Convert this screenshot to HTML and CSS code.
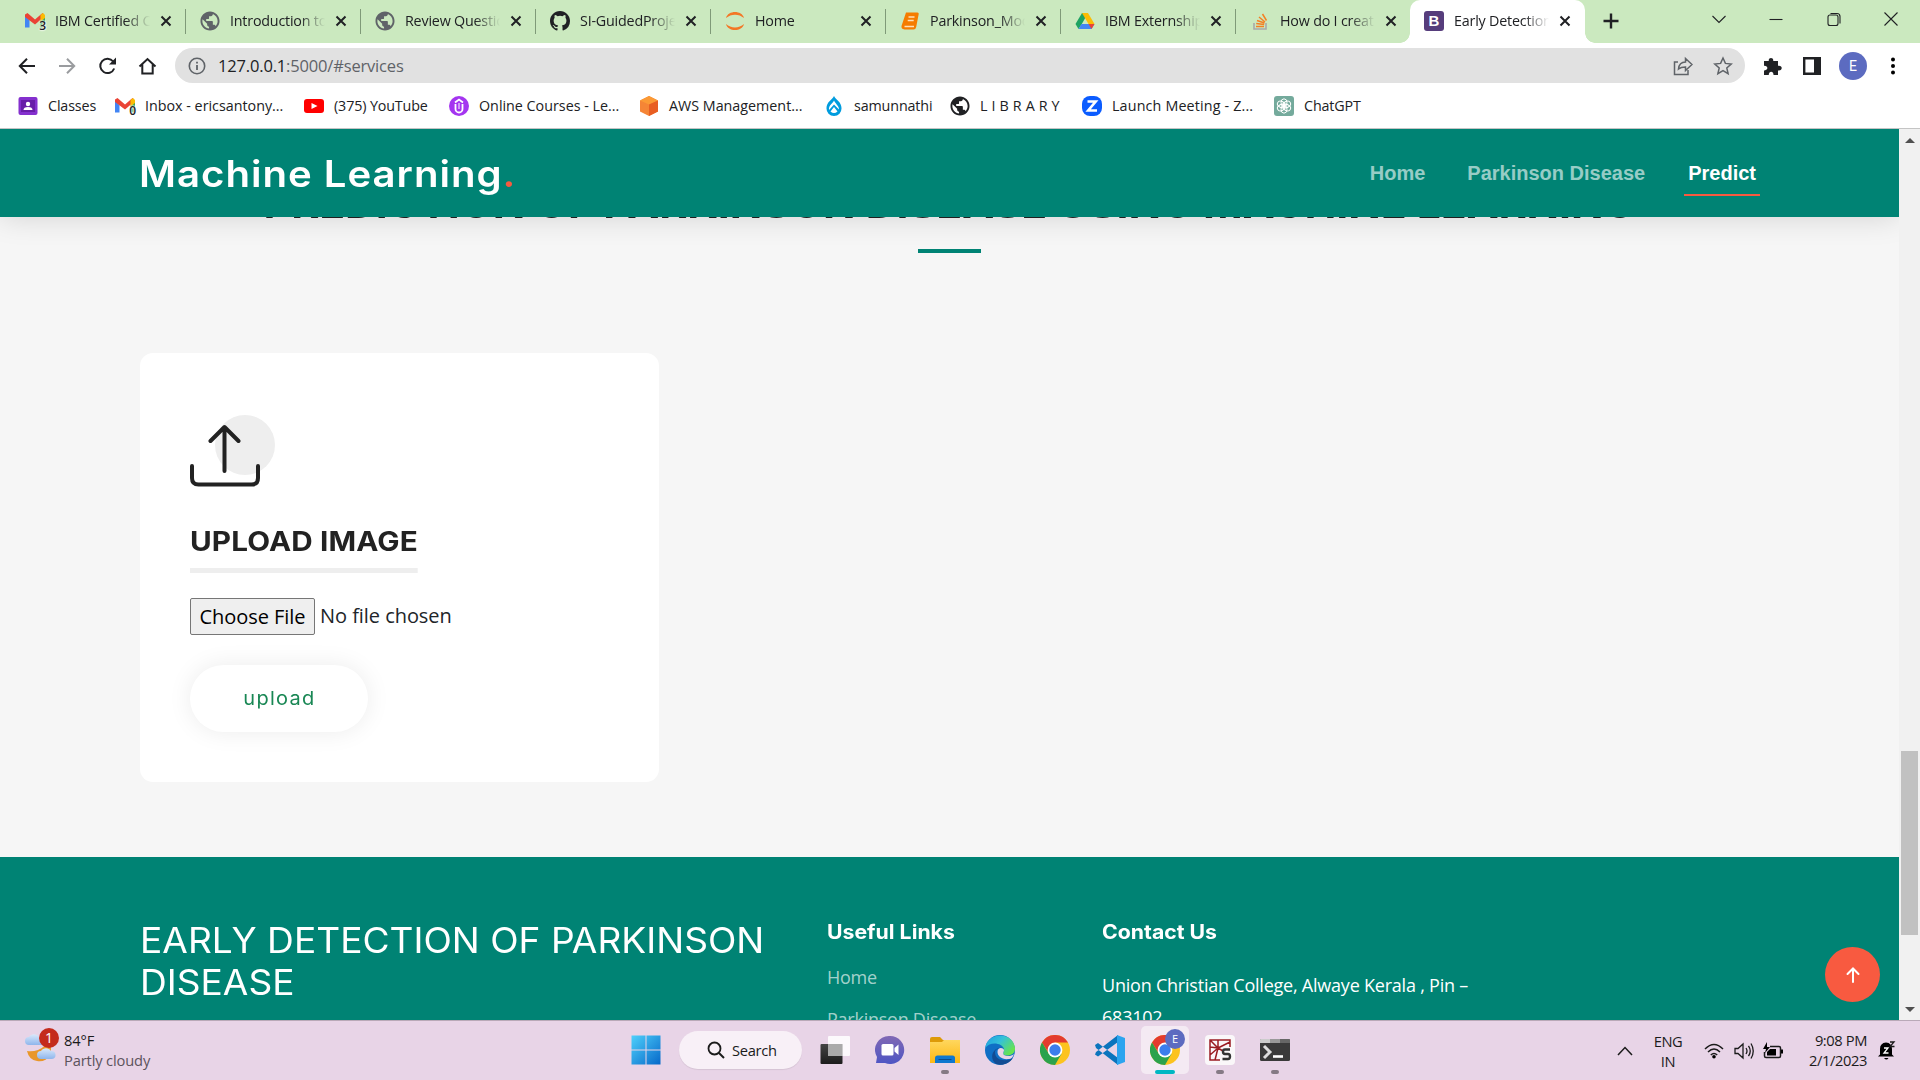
FILE: index.html
```html
<!DOCTYPE html>
<html lang="en">
<head>
<meta charset="utf-8">
<title>Early Detection of Parkinson Disease</title>
<link rel="stylesheet" href="styles.css">
</head>
<body>
<svg class="defs" width="0" height="0">
  <defs>
    <symbol id="gmail" viewBox="0 0 20 20"><path d="M0 5v11.500h4.500V9z" fill="#4285f4"/><path d="M15.500 9v7.500H20V5z" fill="#34a853"/><path d="M0 3.500 2.500 2 10 8.500 17.500 2 20 5 10 13.500 0 6z" fill="#ea4335"/><path d="M15.500 4 18 2l2 2v3l-4.500 3.500z" fill="#fbbc04"/></symbol>
    <symbol id="globe" viewBox="1.500 1.500 21 21"><path fill="currentColor" d="M12 2C6.480 2 2 6.480 2 12s4.480 10 10 10 10-4.480 10-10S17.520 2 12 2zm-1 17.930c-3.950-.49-7-3.850-7-7.930 0-.62.080-1.210.21-1.790L9 15v1c0 1.100.9 2 2 2v1.930zm6.900-2.540c-.26-.81-1-1.390-1.900-1.390h-1v-3c0-.55-.45-1-1-1H8v-2h2c.55 0 1-.45 1-1V7h2c1.100 0 2-.9 2-2v-.41c2.930 1.190 5 4.060 5 7.410 0 2.080-.8 3.970-2.100 5.390z"/></symbol>
    <symbol id="close" viewBox="0 0 12 12"><path d="M1.500 1.500l9 9m0-9l-9 9" stroke="#202124" stroke-width="2" fill="none"/></symbol>
    <symbol id="chrome" viewBox="0 0 30 30"><circle cx="15" cy="15" r="15" fill="#fcc31e"/><path d="M2 7.500A15 15 0 0 1 28 7.500H15L9 18.500z" fill="#e33b2e"/><path d="M2 7.500A15 15 0 0 0 15 30L21.500 18.700 9 19z" fill="#2ba24c"/><circle cx="15" cy="15" r="7.400" fill="#fff"/><circle cx="15" cy="15" r="5.700" fill="#3b7ded"/></symbol>
    <linearGradient id="gwin" x2="1" y2="1"><stop stop-color="#4fd0fb"/><stop offset="1" stop-color="#0668c9"/></linearGradient>
    <linearGradient id="gtask" x2="0" y2="1"><stop stop-color="#444"/><stop offset="1" stop-color="#1c1c1c"/></linearGradient>
    <linearGradient id="gchat" x2="0" y2="1"><stop stop-color="#8168b4"/><stop offset="1" stop-color="#4d55c4"/></linearGradient>
    <linearGradient id="gfold" x2="0" y2="1"><stop stop-color="#ffd75e"/><stop offset="1" stop-color="#fdb813"/></linearGradient>
    <linearGradient id="gedge" x2="1" y2=".6"><stop stop-color="#1b9de2"/><stop offset=".5" stop-color="#35c1d8"/><stop offset="1" stop-color="#66e34f"/></linearGradient>
    <linearGradient id="gcloud" x2="0" y2="1"><stop stop-color="#d8e8fb"/><stop offset="1" stop-color="#8fb6ec"/></linearGradient>
  </defs>
</svg>

<div class="tabs">
  <div class="tab"><span class="fav"><svg viewBox="0 0 20 20"><use href="#gmail"/></svg><b class="count">3</b></span><span class="tab-title">IBM Certified C</span><svg class="x"><use href="#close"/></svg></div>
  <div class="tab"><svg class="fav grey" viewBox="0 0 20 20"><use href="#globe"/></svg><span class="tab-title">Introduction to</span><svg class="x"><use href="#close"/></svg></div>
  <div class="tab"><svg class="fav grey" viewBox="0 0 20 20"><use href="#globe"/></svg><span class="tab-title">Review Questio</span><svg class="x"><use href="#close"/></svg></div>
  <div class="tab"><svg class="fav" viewBox="0 0 16 16"><path fill="#202124" d="M8 0C3.580 0 0 3.580 0 8c0 3.540 2.290 6.530 5.470 7.590.4.070.55-.17.55-.38v-1.490c-2.010.37-2.530-.49-2.690-.94-.09-.23-.48-.94-.82-1.130-.28-.15-.68-.52-.01-.53.63-.01 1.080.58 1.230.82.72 1.210 1.870.87 2.330.66.07-.52.28-.87.51-1.070-1.780-.2-3.640-.89-3.640-3.950 0-.87.31-1.590.82-2.150-.08-.2-.36-1.020.08-2.120 0 0 .67-.21 2.200.82a7.600 7.600 0 0 1 4 0c1.530-1.040 2.200-.82 2.200-.82.44 1.100.16 1.920.08 2.120.51.56.82 1.270.82 2.150 0 3.070-1.870 3.750-3.650 3.950.29.25.54.73.54 1.480v2.200c0 .21.15.46.55.38A8 8 0 0 0 16 8c0-4.420-3.580-8-8-8z"/></svg><span class="tab-title">SI-GuidedProje</span><svg class="x"><use href="#close"/></svg></div>
  <div class="tab"><svg class="fav" viewBox="0 0 20 20"><path d="M1 7C3-1 17-1 19 7 14 2.500 6 2.500 1 7zM1 13c2 8 16 8 18 0-5 4.500-13 4.500-18 0z" fill="#f37726"/></svg><span class="tab-title">Home</span><svg class="x"><use href="#close"/></svg></div>
  <div class="tab"><svg class="fav" viewBox="0 0 20 20"><path d="M6 1.500h11.500q1.500 0 1.200 1.500l-2.500 13q-.5 2.500-2.700 2.500H4.500Q1 18 1.500 15z" fill="#f57c00"/><path d="M8.500 6h6M7.700 9.500h6M4.500 15.500h9.500" stroke="#ffe0b8" stroke-width="1.300"/></svg><span class="tab-title">Parkinson_Mod</span><svg class="x"><use href="#close"/></svg></div>
  <div class="tab"><svg class="fav" viewBox="0 0 20 20"><path d="M7 2h6L6.500 13.500 3.500 18 .5 13z" fill="#1ea362"/><path d="M7 2h6l6.500 11h-6z" fill="#fbbc04"/><path d="M6.500 13h13l-3 5h-13z" fill="#4285f4"/><path d="M13.500 13h6l-3 5z" fill="#ea4335"/></svg><span class="tab-title">IBM Externship</span><svg class="x"><use href="#close"/></svg></div>
  <div class="tab last"><svg class="fav" viewBox="0 0 20 20"><path d="M4 12v6h12v-6" stroke="#a9a9a9" stroke-width="1.600" fill="none"/><path d="M6 15.500h8M6.200 12.600l8 .8M7 9.500l7.500 2.500M9 6l6 5M12.500 3l4 6.500" stroke="#f48024" stroke-width="1.500"/></svg><span class="tab-title">How do I creat</span><svg class="x"><use href="#close"/></svg></div>
  <div class="tab active"><span class="fav boot">B</span><span class="tab-title">Early Detection</span><svg class="x"><use href="#close"/></svg></div>
  <svg class="plus" viewBox="0 0 16 16"><path d="M8 .5v15M.5 8h15" stroke="#202124" stroke-width="2.400"/></svg>
  <div class="winctl">
    <svg viewBox="0 0 16 16"><path d="M1.500 5 8 11.500 14.500 5"/></svg>
    <svg viewBox="0 0 16 16"><path d="M1.500 8.500h13"/></svg>
    <svg viewBox="0 0 16 16"><rect x="2" y="4" width="10" height="10.500" rx="2"/><path d="M4.500 2.500H11q3 0 3 3v7"/></svg>
    <svg viewBox="0 0 16 16"><path d="M1.500 1.500l13 13m0-13l-13 13"/></svg>
  </div>
</div>

<div class="toolbar">
  <svg class="nav-ic" viewBox="0 0 20 20"><path d="M18 10H3m7-7.200L2.800 10l7.200 7.200"/></svg>
  <svg class="nav-ic dim" viewBox="0 0 20 20"><path d="M2 10h15m-7-7.200 7.200 7.200-7.200 7.200"/></svg>
  <svg class="nav-ic" viewBox="0 0 20 20"><path d="M17.200 12.500A7.200 7.200 0 1 1 16.200 5.500"/><path d="M19 1.500v7h-7z" fill="#202124" stroke="none"/></svg>
  <svg class="nav-ic" viewBox="0 0 20 20"><path d="M2.500 10.500 10.500 3l8 7.500M5.300 8.500v9h10.400v-9"/></svg>
  <div class="omnibox">
    <svg class="info" viewBox="0 0 18 18"><circle cx="9" cy="9" r="7.700" fill="none" stroke="#5f6368" stroke-width="1.600"/><path d="M9 8v5M9 4.800v1.800" stroke="#5f6368" stroke-width="1.800"/></svg>
    <span class="url"><b>127.0.0.1</b>:5000/#services</span>
    <svg class="omni-ic" viewBox="0 0 20 20"><path d="M5 6H1.500v12.500H15V14M5.500 13c.5-5 3-7 7-7V2.500l6.500 6-6.500 6V11c-3 0-5 .2-7 2z"/></svg>
    <svg class="omni-ic star" viewBox="0 0 20 20"><path d="M10 2l2.400 5.400 5.800.6-4.400 3.900 1.300 5.800L10 14.700l-5.100 3 1.300-5.800L1.800 8l5.800-.6z"/></svg>
  </div>
  <svg class="puzzle" viewBox="0 0 20 20"><path fill="#202124" d="M1 5h4.800C5 1 11 1 10.200 5H15v4.800c5-.8 5 5.400 0 4.600V19h-4.500c.3-4.500-5-4.500-4.700 0H1v-4.600c4.500.4 4.500-5 0-4.600z"/></svg>
  <svg class="panel-ic" viewBox="0 0 18 18"><path d="M1.200 1.200h15.600v15.600H1.200z" fill="#fff" stroke="#202124" stroke-width="2.400"/><path d="M11 1h6v16h-6z" fill="#202124"/></svg>
  <span class="avatar">E</span>
  <svg class="dots" viewBox="0 0 4 18"><circle cx="2" cy="2.500" r="2"/><circle cx="2" cy="9" r="2"/><circle cx="2" cy="15.500" r="2"/></svg>
</div>

<div class="bookmarks">
  <span class="bm"><svg viewBox="0 0 20 20"><rect x=".5" y="1" width="19" height="18" rx="2" fill="#8430ce"/><rect x="3" y="4" width="14" height="12" fill="#681da8"/><circle cx="10" cy="8" r="2.200" fill="#fff"/><path d="M5.500 14q0-3 4.500-3t4.500 3z" fill="#fff"/></svg>Classes</span>
  <span class="bm wide"><span class="fav"><svg viewBox="0 0 20 20"><use href="#gmail"/></svg><b class="count">0</b></span>Inbox - ericsantony...</span>
  <span class="bm"><svg viewBox="0 0 20 20"><rect y="3" width="20" height="14" rx="3" fill="#f00"/><path d="M7.500 7v6l6-3z" fill="#fff"/></svg>(375) YouTube</span>
  <span class="bm wide"><svg viewBox="0 0 20 20"><circle cx="10" cy="10" r="10" fill="#a435f0"/><path d="M6.500 8v5a3.500 3.500 0 0 0 7 0V8M6 6.500l4-3 4 3" fill="none" stroke="#fff" stroke-width="1.800"/><path d="M10 7v6" stroke="#fff"/></svg>Online Courses - Le...</span>
  <span class="bm wide"><svg viewBox="0 0 20 20"><path d="M10 0l9 4.500v11L10 20l-9-4.500v-11z" fill="#f58536"/><path d="M10 0l9 4.500L10 8.500 1 4.500z" fill="#fb9a35"/><path d="M10 8.500l9-4v11L10 20z" fill="#e85e22"/></svg>AWS Management...</span>
  <span class="bm"><svg viewBox="0 0 20 20"><path d="M10 0c2 4 7.500 6 7.500 12A7.500 7.500 0 0 1 10 20a7.500 7.500 0 0 1-7.500-8C2.500 6 8 4 10 0z" fill="#009cde"/><path d="M10 4.500c1 3 5 5 5 9L10 8.500 5 14C4.500 9 9 7.500 10 4.500zM10 11l3.500 4.500q-3.500 3-7 0z" fill="#fff"/></svg>samunnathi</span>
  <span class="bm lib"><svg viewBox="0 0 20 20"><use href="#globe"/></svg>L I B R A R Y</span>
  <span class="bm zoom"><svg viewBox="0 0 20 20"><rect width="20" height="20" rx="8" fill="#0b5cff"/><path d="M5.500 5.500h8.200l-7.500 9H15" fill="none" stroke="#fff" stroke-width="2.600"/></svg>Launch Meeting - Z...</span>
  <span class="bm"><svg viewBox="0 0 20 20"><rect width="20" height="20" rx="3" fill="#74aa9c"/><g fill="none" stroke="#fff" stroke-width="1"><ellipse cx="10" cy="6.800" rx="3" ry="4"/><ellipse cx="10" cy="6.800" rx="3" ry="4" transform="rotate(60 10 10)"/><ellipse cx="10" cy="6.800" rx="3" ry="4" transform="rotate(120 10 10)"/><ellipse cx="10" cy="6.800" rx="3" ry="4" transform="rotate(180 10 10)"/><ellipse cx="10" cy="6.800" rx="3" ry="4" transform="rotate(240 10 10)"/><ellipse cx="10" cy="6.800" rx="3" ry="4" transform="rotate(300 10 10)"/></g></svg>ChatGPT</span>
</div>

<div class="viewport">
  <div class="page">
    <header class="site-header">
      <div class="logo">Machine Learning<span>.</span></div>
      <nav><a>Home</a><a>Parkinson Disease</a><a class="current">Predict</a></nav>
    </header>
    <section class="services">
      <h2>PREDICTION OF PARKINSON DISEASE USING MACHINE LEARNING</h2>
      <div class="rule"></div>
      <div class="card">
        <svg class="upload-ic" width="86" height="72" viewBox="0 0 86 72"><circle cx="55" cy="30" r="30" fill="#eee"/><path d="M34.500 56V13M20.500 26l14-14 14 14M2 51v12q0 6.500 6.500 6.500h53q6.500 0 6.500-6.500V51" fill="none" stroke="#222" stroke-width="4" stroke-linecap="round" stroke-linejoin="round"/></svg>
        <h3>UPLOAD IMAGE</h3>
        <div class="file"><button>Choose File</button><span>No file chosen</span></div>
        <button class="upload"><span>upload</span></button>
      </div>
    </section>
    <footer>
      <div class="brand">EARLY DETECTION OF PARKINSON<br>DISEASE</div>
      <div class="links"><h4>Useful Links</h4><a>Home</a><a>Parkinson Disease</a></div>
      <div class="contact"><h4>Contact Us</h4><p>Union Christian College, Alwaye Kerala , Pin –<br>683102</p></div>
    </footer>
    <div class="to-top"><svg width="16" height="18" viewBox="0 0 16 18"><path d="M8 16V2.500M2.500 8 8 2.500 13.500 8" fill="none" stroke="#fff" stroke-width="2" stroke-linecap="round"/></svg></div>
  </div>
  <div class="scrollbar"><i class="up"></i><i class="thumb"></i><i class="down"></i></div>
</div>

<div class="taskbar">
  <div class="weather">
    <span class="w-ic"><svg width="32" height="34" viewBox="0 0 32 34"><path d="M3 22q5 1 11-1 8-3 9-10l4-1v14a12 12 0 0 1-14 8q-8-1-10-10z" fill="#e9972a"/><path d="M5 16a4 4 0 0 1 0-8 6 6 0 0 1 10 0q4 1 3 8z" fill="url(#gcloud)"/><path d="M17 30a4 4 0 0 1 0-8 6 6 0 0 1 10 0 4 4 0 0 1 1 8z" fill="url(#gcloud)"/></svg><b>1</b></span>
    <span class="w-text"><span>84°F</span><em>Partly cloudy</em></span>
  </div>
  <div class="apps">
    <span class="app"><svg viewBox="0 0 30 30"><path fill="url(#gwin)" d="M.5.500h14v14H.5zM15.500.500h14v14h-14zM.5 15.500h14v14H.5zM15.500 15.500h14v14h-14z"/></svg></span>
    <span class="search"><svg width="18" height="18" viewBox="0 0 18 18"><circle cx="7.500" cy="7.500" r="6" fill="none" stroke="#1b1b1b" stroke-width="1.800"/><path d="M12 12l5 5" stroke="#1b1b1b" stroke-width="2"/></svg>Search</span>
    <span class="app"><svg viewBox="0 0 30 30"><rect x=".5" y="9" width="22" height="20" rx="1" fill="url(#gtask)"/><rect x="8" y="1" width="22" height="20" rx="1" fill="#fff" opacity=".85"/><path d="M8 9h14.500v12H8z" fill="#aaa"/></svg></span>
    <span class="app"><svg viewBox="0 0 30 30"><path d="M15 1a14 14 0 1 1-5 27H1l1-6A14 14 0 0 1 15 1z" fill="url(#gchat)"/><rect x="6.500" y="9" width="12" height="11.500" rx="1.500" fill="#fff"/><path d="M19.500 13l4-3.500v10.500l-4-3.500z" fill="#fff"/></svg></span>
    <span class="app run"><svg viewBox="0 0 30 30"><path d="M0 4q0-2 2-2h8l3 3h17v8H0z" fill="#dd9a08"/><path d="M0 7h12l2-2h16v23H0z" fill="url(#gfold)"/><path d="M5 28v-5q0-2.500 2.500-2.500h15q2.500 0 2.500 2.500v5z" fill="#0f78cf"/><path d="M8.500 24.500h13" stroke="#0a4c8c"/></svg></span>
    <span class="app"><svg viewBox="0 0 30 30"><circle cx="15" cy="15" r="15" fill="#0f6fc5"/><path d="M.3 13C2-3 28-4 30 13c.5 7-7 9-11.500 6.500-1-1.500 1-3 .5-5.500C17.500 8 5 6 .3 13z" fill="url(#gedge)"/><path d="M10 17c0 9 11 10 18 6-4 6-11 8-17 6-5-4-5-10-1-14 1-1 5-3 7-2-4 0-7 2-7 4z" fill="#124c93"/><path d="M12.500 17c0-6 7-4 6.500-1.500-.5 1.500-1.500 3 0 4.500 3 1.500 7 1.500 10-1-1 3-3 5-5 5-7 1-11.500-3-11.500-7z" fill="#e8d4e7"/></svg></span>
    <span class="app"><svg viewBox="0 0 30 30"><use href="#chrome"/></svg></span>
    <span class="app"><svg viewBox="0 0 30 30"><path d="M0 10l3-2 20 15v7L1 13zM0 19.500l3 2L23 7V0L1 17z" fill="#0b74bd"/><path d="M22 0l8 3v24l-8 3z" fill="#2ba4ef"/></svg></span>
    <span class="app active-app"><svg viewBox="0 0 30 30"><use href="#chrome"/></svg><b>E</b></span>
    <span class="app run"><svg viewBox="0 0 30 30"><rect width="30" height="30" rx="4" fill="#faf7f9"/><path d="M15 25H5V5h20v7M5 5l8 8 12-6M13 5v8L5 20M13 13l-3 12M5 12l8 1 5 3" fill="none" stroke="#9b1c22" stroke-width="1.500"/><path d="M25 14.500h-5q-2 0-2 2.200t2 2.300h3q2 0 2 2.500t-2 2.500h-5.500" fill="none" stroke="#333" stroke-width="2.400"/></svg></span>
    <span class="app run"><svg viewBox="0 0 30 30"><rect y="4" width="30" height="22" rx="1.500" fill="#3a3a3a"/><path d="M0 8V5q0-1 1-1h9v4z" fill="#ccc"/><path d="M10 4h10v4H10z" fill="#999"/><path d="M20 4h9q1 0 1 1v3H20z" fill="#666"/><path d="M4 11l6 6-6 6" fill="none" stroke="#ddd" stroke-width="3"/><path d="M13 21.500h10" stroke="#fff" stroke-width="2.600"/></svg></span>
  </div>
  <div class="tray">
    <svg class="chev" width="16" height="10" viewBox="0 0 16 10"><path d="M1 9l7-7.500L15 9" fill="none" stroke="#1b1b1b" stroke-width="1.500"/></svg>
    <span class="lang">ENG<br>IN</span>
    <svg class="wifi" width="20" height="16" viewBox="0 0 20 16"><path d="M1 6q9-9 18 0M4 9q6-6 12 0M6.800 12q3.200-3 6.400 0" fill="none" stroke="#1b1b1b" stroke-width="1.500"/><circle cx="10" cy="13.800" r="1.800"/></svg>
    <svg class="vol" width="20" height="18" viewBox="0 0 20 18"><path d="M1 6.500h3L9 2v14l-5-4.500H1zM12 6q2 3 0 6M14.500 3.800q3.500 5.200 0 10.400M17 1.500q4.500 7.500 0 15" fill="none" stroke="#1b1b1b" stroke-width="1.300"/></svg>
    <svg class="bat" width="21" height="18" viewBox="0 0 21 18"><path d="M7 4.500h9q1.500 0 1.500 1.500v8q0 1.500-1.500 1.500H3q-1.500 0-1.500-1.500v-4" fill="none" stroke="#1b1b1b" stroke-width="1.500"/><path d="M7 7h6v6.500H4V10z"/><path d="M18 7.500h2v4h-2zM4 0L0 7h3l-1 4 5-6H4z"/></svg>
    <span class="clock">9:08 PM<br>2/1/2023</span>
    <svg class="bell" width="18" height="20" viewBox="0 0 18 20"><path d="M0 15.500l2-2V8q0-6 6-6.500 6 .5 6 6.500v5.500l2 2zM6 17h4.500q-2 3-4.500 0z"/><path d="M6 7h4l-4 5h4.500" stroke="#fff" stroke-width="1.300" fill="none"/><path d="M12 1h4l-4 4.500h4.500" stroke="#1b1b1b" stroke-width="1.300" fill="none"/></svg>
  </div>
</div>
</body>
</html>
```
FILE: styles.css
```css
* { box-sizing: border-box; }
body { margin: 0; width: 1920px; height: 1080px; overflow: hidden; display: flex; flex-direction: column; background: #fff; font-family: "Open Sans", "Noto Sans", sans-serif; color: #202124; }
h2, h3, h4, p { margin: 0; }
svg { display: block; flex: none; }
.defs { position: absolute; }
button { font: inherit; }

/* tab strip */
.tabs { height: 43px; flex: none; background: #cbe9bf; display: flex; padding-left: 11px; }
.tab { position: relative; width: 175px; flex: none; height: 43px; display: flex; align-items: center; padding: 0 0 2px 14px; }
.tab:not(.active):not(.last)::after { content: ""; position: absolute; right: 0; top: 9px; height: 25px; width: 1px; background: #7f9a78; }
.tab:nth-child(8) { width: 174px; }
.fav { width: 20px; height: 20px; flex: none; position: relative; }
.grey { color: #5f6368; }
.count { position: absolute; right: -1px; bottom: -2px; font-size: 12px; font-weight: 600; line-height: 14px; text-shadow: 0 0 2px #fff, 0 0 2px #fff, 0 0 2px #fff; }
.tab-title { margin-left: 10px; width: 97px; overflow: hidden; white-space: nowrap; font-size: 14.3px; letter-spacing: -.2px; -webkit-mask-image: linear-gradient(90deg, #000 72%, transparent 98%); mask-image: linear-gradient(90deg, #000 72%, transparent 98%); }
.x { width: 12px; height: 12px; margin-left: 8px; }
.active { background: #fff; border-radius: 10px 10px 0 0; }
.active::before, .active::after { content: ""; position: absolute; bottom: 0; width: 10px; height: 10px; }
.active::before { left: -10px; background: radial-gradient(circle at 0 0, #cbe9bf 9.5px, #fff 10px); }
.active::after { right: -10px; background: radial-gradient(circle at 100% 0, #cbe9bf 9.5px, #fff 10px); }
.boot { background: #563d7c; border-radius: 3px; color: #fff; font: 700 15px/20px "Liberation Sans", sans-serif; text-align: center; }
.plus { width: 16px; height: 16px; margin: 13px 0 0 18px; }
.winctl { margin: 11px 21px 0 auto; display: flex; gap: 41.500px; }
.winctl svg { width: 16px; height: 16px; fill: none; stroke: #202124; stroke-width: 1.100; }

/* address bar */
.toolbar { height: 45px; flex: none; display: flex; align-items: center; padding-left: 17px; }
.nav-ic { width: 20px; height: 20px; margin-right: 20px; fill: none; stroke: #202124; stroke-width: 2; }
.dim { stroke: #9a9c9f; }
.omnibox { width: 1570px; height: 35px; margin-left: -2px; border-radius: 18px; background: #e1e1e1; display: flex; align-items: center; padding: 0 12px 0 13px; }
.info { width: 18px; height: 18px; }
.url { margin: 0 auto 0 12px; font-size: 16.500px; letter-spacing: -.17px; color: #5f6368; }
.url b { font-weight: 400; color: #202124; }
.omni-ic { width: 20px; height: 20px; fill: none; stroke: #5f6368; stroke-width: 1.500; }
.star { margin-left: 20px; }
.puzzle { width: 20px; height: 20px; margin-left: 18px; }
.panel-ic { width: 18px; height: 18px; margin-left: 20px; }
.avatar { width: 28px; height: 28px; margin-left: 18px; border-radius: 50%; background: #5c6bc0; color: #fff; font: 14px/28px Roboto, sans-serif; text-align: center; }
.dots { width: 4px; height: 18px; margin-left: 24px; }

.bookmarks { height: 41px; flex: none; border-bottom: 1px solid #c4c4c4; display: grid; grid-template-columns: 97px 189px 145px 190px 185px 126px 132px 192px 120px; padding: 0 0 5px 18px; align-items: center; }
.bm { display: flex; align-items: center; gap: 10px; font-size: 14.300px; letter-spacing: -.13px; white-space: nowrap; }
.bm svg { width: 20px; height: 20px; }
.wide { letter-spacing: 0; }
.lib, .zoom { letter-spacing: .16px; }

/* page */
.viewport { height: 891px; flex: none; display: flex; }
.page { position: relative; width: 1899px; height: 891px; overflow: hidden; background: #f6f6f6; font-family: "Open Sans", sans-serif; }
.site-header { position: relative; z-index: 2; height: 88px; background: #008374; box-shadow: 0 0 30px rgba(0, 0, 0, .15); display: flex; align-items: center; justify-content: space-between; padding: 0 139px 0 140px; }
.logo { font: 600 37px Inter, sans-serif; letter-spacing: .9px; color: #fff; margin-left: -1px; transform: scaleX(1.085); transform-origin: left; }
.logo span { color: #f85a40; }
nav { display: flex; gap: 34px; font: 700 20px "Liberation Sans", sans-serif; }
nav a { padding: 12px 4px 9px; color: rgba(255, 255, 255, .6); border-bottom: 2px solid transparent; }
nav .current { margin-left: 1px; color: #fff; border-color: #f85a40; }
.services { height: 640px; padding: 0 140px; display: flex; flex-direction: column; align-items: flex-start; }
.services h2 { align-self: center; margin-top: -37px; font: 700 40px/48px Inter, sans-serif; color: #222; white-space: nowrap; transform: scaleX(1.066); }
.rule { align-self: center; width: 63px; height: 4px; margin-top: 21px; background: #008374; }
.card { width: 519px; height: 429px; margin-top: 100px; padding: 62px 50px 0; background: #fff; border-radius: 13px; display: flex; flex-direction: column; align-items: flex-start; }
.card h3 { margin-top: 37px; padding-top: 1px; padding-bottom: 9px; border-bottom: 5px solid #eee; font: 700 27px/34px Inter, sans-serif; letter-spacing: .1px; color: #222; white-space: nowrap; transform: scaleX(1.1); transform-origin: left; }
.file { margin-top: 25px; display: flex; align-items: center; gap: 5px; font-size: 20px; color: #212529; letter-spacing: -.05px; }
.file span { padding-bottom: 2px; }
.file button { width: 125px; height: 37px; padding: 0; border: 1px solid #767676; border-radius: 2px; background: #efefef; color: #000; letter-spacing: -.05px; }
.upload { width: 178px; height: 67px; margin-top: 30px; padding: 0 0 2px; border: 0; border-radius: 34px; background: #fff; box-shadow: 0 0 24px rgba(0, 0, 0, .08); color: #198754; font: 400 18.500px Inter, sans-serif; letter-spacing: 1.200px; }
.upload span { display: inline-block; transform: scaleX(1.08); }
footer { height: 170px; background: #008374; color: #fff; display: grid; grid-template-columns: 687px 275px 1fr; padding: 63px 0 0 140px; }
.brand { margin-top: -1px; font: 400 35px/42px Inter, sans-serif; white-space: nowrap; transform: scaleX(1.06); transform-origin: left; justify-self: start; }
footer h4 { font: 700 19.500px/24px Inter, sans-serif; letter-spacing: 0; transform: scaleX(1.09); transform-origin: left; justify-self: start; }
.links { display: flex; flex-direction: column; letter-spacing: -.25px; font-size: 18px; line-height: 27px; }
.links a { margin-top: 15px; color: rgba(255, 255, 255, .65); }
.links h4 + a { margin-top: 20px; }
.contact p { margin-top: 25px; font-size: 18px; line-height: 32px; letter-spacing: -.22px; }
.to-top { position: absolute; right: 19px; bottom: 18px; width: 55px; height: 55px; border-radius: 50%; background: #f85a40; display: grid; place-items: center; }
.scrollbar { width: 21px; background: #f1f1f1; display: flex; flex-direction: column; align-items: center; }
.up, .down { border: 5px solid transparent; }
.up { margin-top: 4px; border-bottom-color: #505050; }
.down { margin-top: 72px; border-top-color: #505050; }
.thumb { width: 17px; height: 184px; margin-top: 608px; background: #c1c1c1; }

/* taskbar */
.taskbar { height: 60px; flex: none; border-top: 1px solid #b9a9b8; background: #e8d4e7; display: grid; grid-template-columns: 618px 1fr 310px; font-size: 14.700px; color: #1b1b1b; }
.weather { display: flex; padding: 8px 0 0 24px; gap: 8px; }
.w-ic { position: relative; width: 32px; }
.w-ic b { position: absolute; left: 15px; top: -1px; width: 20px; height: 20px; border-radius: 50%; background: #c42b1c; color: #fff; font: 14px/20px "Open Sans", sans-serif; text-align: center; }
.w-text { display: flex; flex-direction: column; line-height: 20px; padding-top: 1px; letter-spacing: -.15px; }
.w-text em { font-style: normal; color: #5c535c; }
.apps { display: flex; align-items: center; padding-bottom: 1px; }
.app { position: relative; width: 55px; height: 58px; display: grid; place-items: center; }
.app svg { width: 30px; height: 30px; }
.run::after { content: ""; position: absolute; bottom: 5px; width: 8px; height: 4px; border-radius: 2px; background: #857a85; }
.search { width: 123px; height: 38px; margin: 0 6px 0 6px; padding-left: 28px; border-radius: 19px; background: #f8f0f7; display: flex; align-items: center; gap: 7px; box-shadow: 0 1px 1px rgba(0, 0, 0, .08); letter-spacing: -.3px; }
.search + .app { margin-left: -1px; }
.active-app::before { content: ""; position: absolute; width: 48px; height: 48px; border-radius: 5px; background: #f4eaf3; }
.active-app svg { position: relative; }
.active-app::after { content: ""; position: absolute; bottom: 5px; width: 20px; height: 4px; border-radius: 2px; background: #00b7c3; }
.active-app b { position: absolute; left: 28px; top: 8px; width: 20px; height: 20px; border-radius: 50%; background: #5c6bc0; color: #fff; font: 11px/20px "Open Sans", sans-serif; text-align: center; }
.tray { display: flex; align-items: center; padding-left: 7px; }
.lang, .clock { line-height: 20px; white-space: nowrap; letter-spacing: -.4px; }
.lang { margin-left: 19px; width: 32px; text-align: center; }
.wifi { margin-left: 20px; }
.vol { margin-left: 10px; }
.bat { margin-left: 9px; }
.clock { margin: -2px 0 0 21px; width: 62px; text-align: right; }
.bell { margin-left: 11px; }
```
